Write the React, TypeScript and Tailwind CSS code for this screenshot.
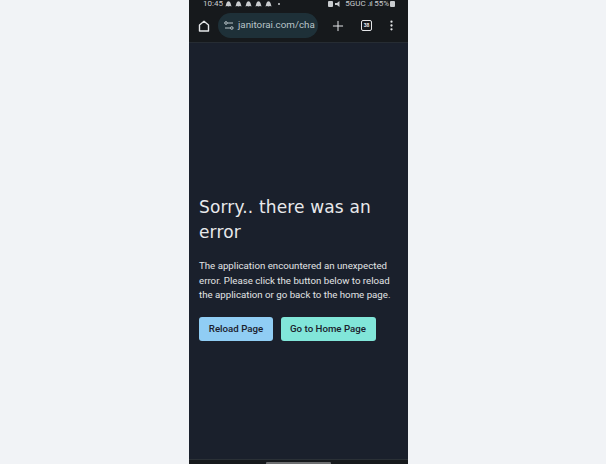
import { Plus, MoreVertical } from 'lucide-react'

function Blob() {
  return (
    <svg width="7" height="6" viewBox="0 0 7 6" fill="#c9cccf">
      <path d="M0.5 5.5 1.5 2Q2 .3 3.5 .3T5.5 2L6.5 5.5 5 5 3.5 5.6 2 5z" />
    </svg>
  )
}

function StatusBar() {
  return (
    <div className="flex h-[8px] items-start justify-between overflow-hidden bg-[#16191c] pl-[14px] pr-[13px] text-[8px] leading-[7px] text-[#c9cccf]">
      <div className="flex items-center">
        <span>10:45</span>
        <div className="ml-[2px] flex gap-[3px]">
          {[0, 1, 2, 3, 4].map((i) => (
            <Blob key={i} />
          ))}
        </div>
        <div className="ml-[6px] h-[2px] w-[2px] rounded-full bg-[#c9cccf]" />
      </div>
      <div className="flex items-center">
        <div className="h-[6px] w-[5px] rounded-[1px] bg-[#c9cccf]" />
        <svg width="7" height="6" viewBox="0 0 7 6" fill="#c9cccf" className="ml-[2px]">
          <path d="M0 2h2L4.500 0v6L2 4H0z" />
        </svg>
        <span className="ml-[3px]">5GUC</span>
        <span className="ml-[2px] tracking-[-0.5px]">.ıl</span>
        <span className="ml-[2px]">55%</span>
        <div className="ml-[1px] h-[6px] w-[5px] rounded-[1px] bg-[#c9cccf]" />
      </div>
    </div>
  )
}

function Toolbar() {
  return (
    <div className="flex h-[35px] items-center border-b border-[#262c33] bg-[#16191c] pt-[1px] pl-[9px] text-[#e4e6e8]">
      <svg width="12" height="12" viewBox="0 0 12 12" fill="none" stroke="currentColor" strokeWidth="1.4" strokeLinejoin="round" className="shrink-0">
        <path d="M1.500 11V5L6 1.200 10.500 5v6z" />
      </svg>
      <div className="ml-[8px] flex h-[25px] w-[100px] items-center overflow-hidden rounded-full bg-[#1e3038] pl-[6px] text-[9.8px] text-[#b9c4c8]">
        <svg width="10" height="9" viewBox="0 0 10 9" fill="none" stroke="currentColor" strokeWidth="1" className="shrink-0">
          <path d="M3.500 2H9" />
          <circle cx="2" cy="2" r="1.300" />
          <path d="M1 7h5" />
          <circle cx="7.800" cy="7" r="1.300" />
        </svg>
        <span className="ml-[4px] whitespace-nowrap">janitorai.com/cha</span>
      </div>
      <Plus size={16} strokeWidth={1.5} className="ml-[12px] shrink-0" />
      <div className="ml-[15px] flex h-[11px] w-[11px] shrink-0 items-center justify-center rounded-[2px] border border-[#e4e6e8] text-[5px] font-bold">
        38
      </div>
      <MoreVertical size={13} strokeWidth={2.2} className="ml-[13px] shrink-0" />
    </div>
  )
}

export default function App() {
  return (
    <div className="h-[464px] w-[606px] overflow-hidden bg-[#f1f3f6] pl-[189px] font-['Roboto',sans-serif]">
      <div className="flex h-full w-[219px] flex-col bg-[#1a202c]">
        <StatusBar />
        <Toolbar />
        <main className="flex flex-1 flex-col px-[10px] pt-[152px]">
          <h1 className="font-['DejaVu_Sans',sans-serif] text-[17px] leading-[25px] tracking-[0.15px] text-[#e8e9eb]">Sorry.. there was an error</h1>
          <p className="mt-[14px] text-[9.7px] leading-[14.6px] text-[#e2e4e6]">
            The application encountered an unexpected error. Please click the button below to reload the application or go back to the home page.
          </p>
          <div className="mt-[14px] flex gap-[7.500px]">
            <button className="h-[24px] w-[74px] rounded-[3px] bg-[#90cdf4] text-[9.7px] font-medium text-[#1a202c]">Reload Page</button>
            <button className="h-[24px] w-[95px] rounded-[3px] bg-[#81e6d9] text-[9.7px] font-medium text-[#1a202c]">Go to Home Page</button>
          </div>
        </main>
        <div className="relative h-[5px] border-t border-[#2a3036] bg-[#16191c]">
          <div className="absolute left-[77px] top-[2px] h-[3px] w-[65px] rounded-t-[1px] bg-[#6d6e70]" />
        </div>
      </div>
    </div>
  )
}
